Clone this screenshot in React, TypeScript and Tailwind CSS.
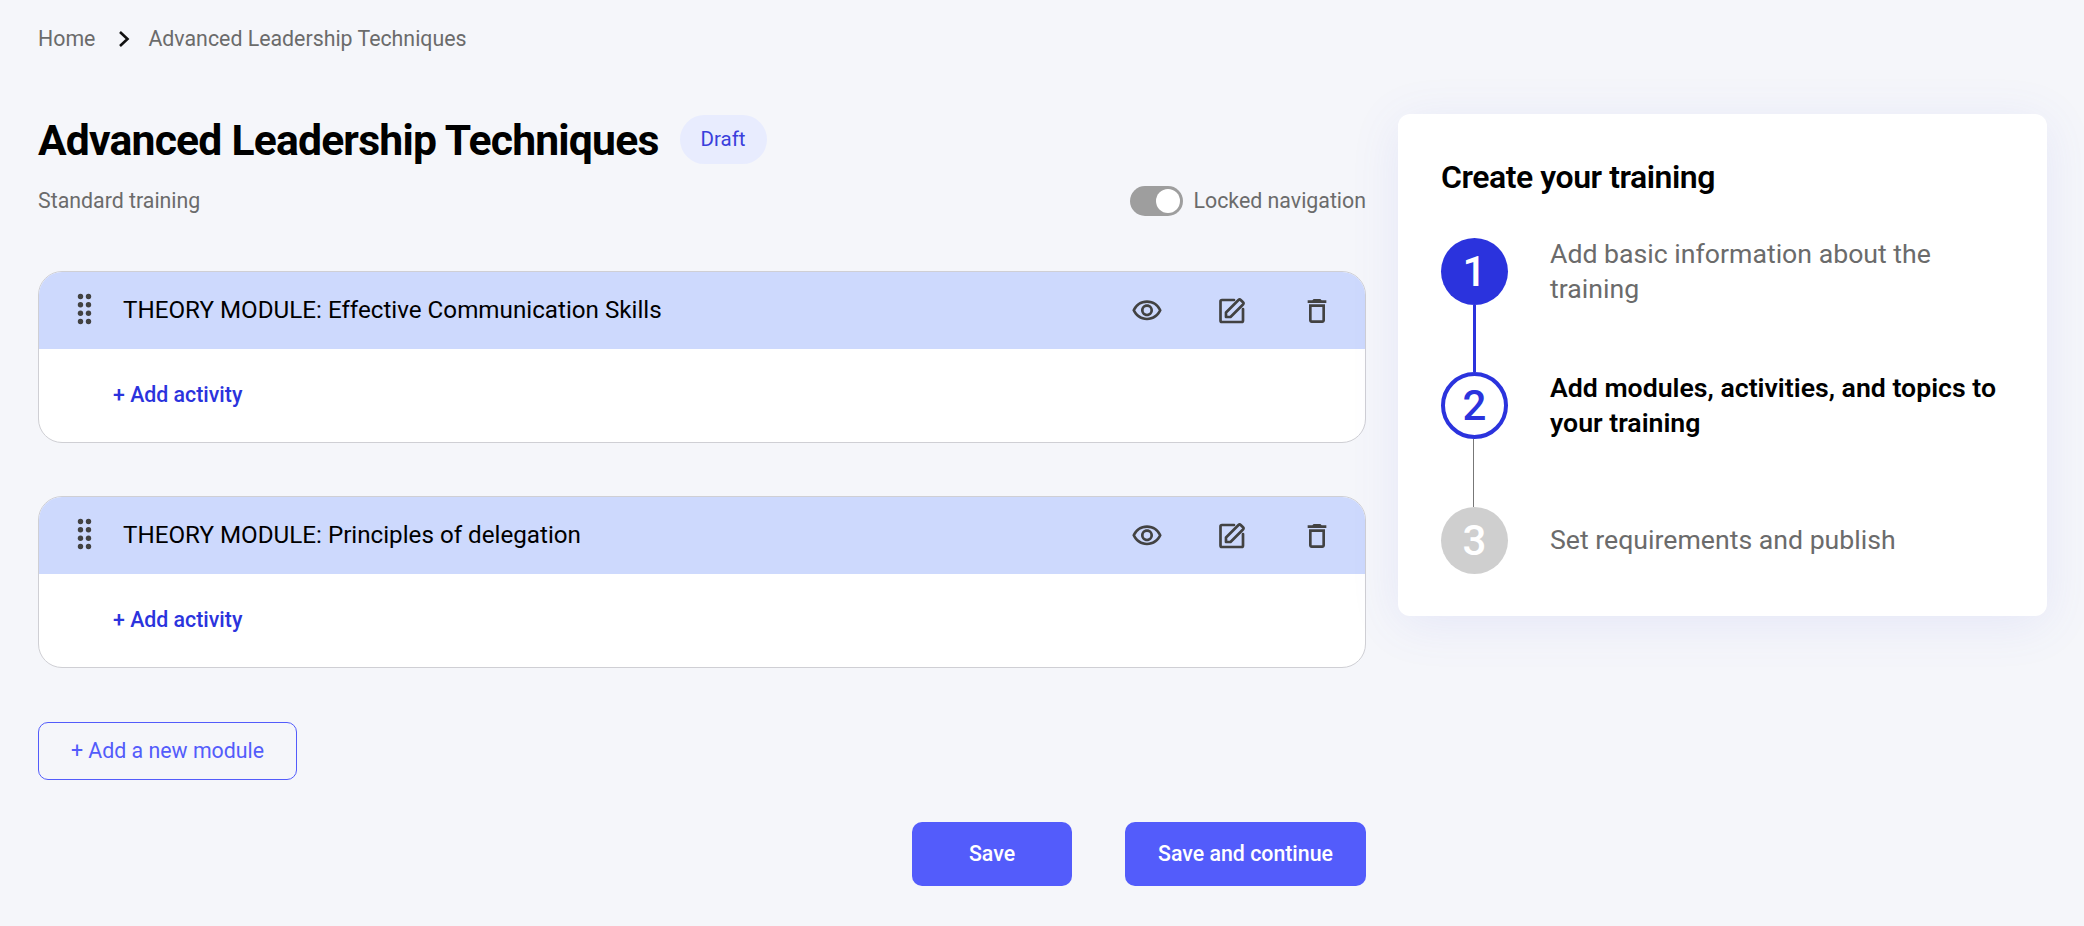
import type { ReactNode } from "react";
import { MdOutlineDelete, MdOutlineVisibility } from "react-icons/md";

const ROBOTO = "font-['Roboto',sans-serif]";

function DragHandle() {
  // 2 x 4 dots, a taller version of the usual drag indicator
  const rows = [3.5, 11.8, 20.2, 28.5];
  return (
    <svg width="16" height="32" viewBox="0 0 16 32" className="-mt-[4px] text-[#424242]" fill="currentColor">
      {rows.map((y) => (
        <g key={y}>
          <circle cx="3.5" cy={y} r="2.7" />
          <circle cx="11.5" cy={y} r="2.7" />
        </g>
      ))}
    </svg>
  );
}

function EditIcon() {
  return (
    <svg width="32" height="32" viewBox="0 0 32 32" fill="none" stroke="#424242" strokeWidth="2.7" strokeLinejoin="round" strokeLinecap="round">
      <path d="M18 5H6a1.5 1.5 0 0 0-1.5 1.5v19A1.5 1.5 0 0 0 6 27h19.5a1.5 1.5 0 0 0 1.5-1.5V14" />
      <path d="M10 22v-4.5L22.5 5a1.6 1.6 0 0 1 2.2 0L27 7.3a1.6 1.6 0 0 1 0 2.2L14.5 22z" />
    </svg>
  );
}

function ModuleCard({ title }: { title: string }) {
  return (
    <div className="overflow-hidden rounded-[24px] border border-[#cfcfd4] bg-white">
      <div className="flex h-[77px] items-center bg-[#cdd9fd] pl-[38px] pr-[32px]">
        <DragHandle />
        <span className="mb-[1px] ml-[30px] text-[24.2px] text-black">{title}</span>
        <div className="ml-auto flex items-center gap-[53px] text-[#424242]">
          <MdOutlineVisibility size={32} />
          <EditIcon />
          <MdOutlineDelete size={32} />
        </div>
      </div>
      <div className="flex h-[93px] items-center pb-[2px] pl-[74px]">
        <span className="text-[21.33px] font-medium text-[#2b33dd]">+ Add activity</span>
      </div>
    </div>
  );
}

function Step({ n, state, children }: { n: number; state: "done" | "active" | "todo"; children: ReactNode }) {
  const circle =
    state === "done"
      ? "bg-[#2b33dd] text-white"
      : state === "active"
        ? "border-4 border-[#2b33dd] bg-white text-[#2b33dd]"
        : "bg-[#cfcfcf] text-white";
  return (
    <div className="flex h-[67px] items-center">
      <div className={`flex h-[67px] w-[67px] shrink-0 items-center justify-center rounded-full text-[42px] font-medium ${circle}`}>{n}</div>
      <div className={`ml-[42px] whitespace-nowrap text-[26.67px] leading-[35px] ${state === "active" ? "font-semibold text-black" : "text-[#6b6b6b]"}`}>{children}</div>
    </div>
  );
}

export default function App() {
  return (
    <div className={`${ROBOTO} flex h-[926px] w-[2084px] bg-[#f5f6fa] pl-[38px] pr-[37px]`}>
      <div className="w-[1328px] shrink-0">
        <nav className="flex h-[78px] items-center text-[21.33px] text-[#6b6b6b]">
          <span>Home</span>
          <svg width="12" height="18" viewBox="0 0 12 18" fill="none" stroke="#111" strokeWidth="2.6" className="ml-[23px] mr-[18px]">
            <path d="M2 2l7.5 7-7.5 7" />
          </svg>
          <span>Advanced Leadership Techniques</span>
        </nav>
        <div className="mt-[37px] flex h-[49px] items-center">
          <h1 className="text-[42.67px] font-bold tracking-[-0.8px] text-black">Advanced Leadership Techniques</h1>
          <span className="ml-[21px] flex h-[49px] w-[87px] items-center justify-center rounded-full bg-[#e8ecfe] text-[20.5px] text-[#3a3fdc]">Draft</span>
        </div>
        <div className="mt-[22px] flex h-[30px] items-center justify-between text-[21.33px] text-[#6b6b6b]">
          <span>Standard training</span>
          <div className="flex items-center gap-[11px]">
            <div className="flex h-[30px] w-[53px] items-center justify-end rounded-full bg-[#9e9e9e] pr-[3px]">
              <div className="h-[24px] w-[24px] rounded-full bg-white" />
            </div>
            <span>Locked navigation</span>
          </div>
        </div>
        <div className="mt-[55px] flex flex-col gap-[53px]">
          <ModuleCard title="THEORY MODULE: Effective Communication Skills" />
          <ModuleCard title="THEORY MODULE: Principles of delegation" />
        </div>
        <button className="mt-[54px] flex h-[58px] w-[259px] items-center justify-center rounded-[10px] border border-[#535cfb] text-[21.33px] text-[#535cfb]">
          + Add a new module
        </button>
        <div className="mt-[42px] flex justify-end gap-[53px]">
          <button className="h-[64px] w-[160px] rounded-[10px] bg-[#535cfb] text-[21.33px] font-medium text-white">Save</button>
          <button className="h-[64px] w-[241px] rounded-[10px] bg-[#535cfb] text-[21.33px] font-medium text-white">Save and continue</button>
        </div>
      </div>
      <aside className="ml-[32px] mt-[114px] h-[502px] w-[649px] shrink-0 rounded-[12px] bg-white pl-[43px] pr-[30px] pt-[43px] shadow-[0_8px_50px_rgba(90,100,230,0.1)]">
        <h2 className="text-[32px] font-semibold leading-[40px] tracking-[-0.45px] text-black">Create your training</h2>
        <div className="mt-[41px]">
          <Step n={1} state="done">Add basic information about the<br />training</Step>
          <div className="ml-[32px] h-[67px] w-[3px] bg-[#2b33dd]" />
          <Step n={2} state="active">Add modules, activities, and topics to<br />your training</Step>
          <div className="ml-[32px] h-[68px] w-px bg-[#777]" />
          <Step n={3} state="todo">Set requirements and publish</Step>
        </div>
      </aside>
    </div>
  );
}
